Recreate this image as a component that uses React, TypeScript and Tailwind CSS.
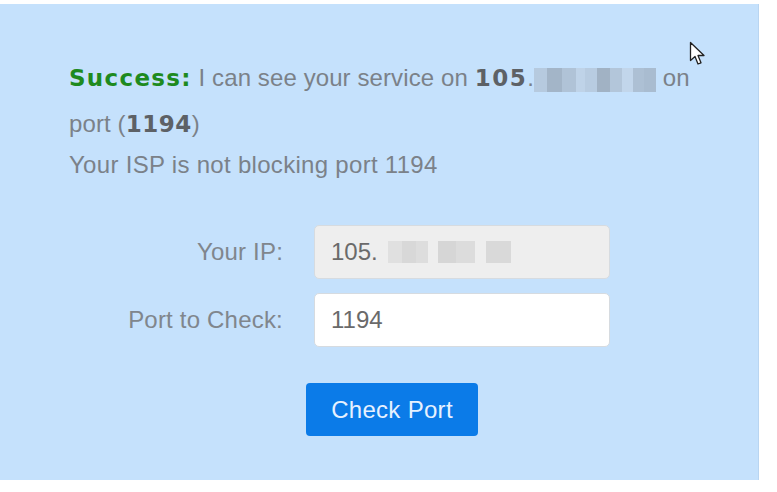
import React from 'react';

type Seg = { w: number; c?: string };

// pixelated "redacted" blocks standing in for the blurred IP digits
const Blur: React.FC<{ segs: Seg[]; h: string }> = ({ segs, h }) => (
    <span className={`inline-flex align-middle ${h}`}>
        {segs.map((s, i) => (
            <span key={i} className="h-full" style={{ width: s.w, backgroundColor: s.c ?? 'transparent' }} />
        ))}
    </span>
);

const Cursor = () => (
    <svg className="absolute left-[689px] top-[37px]" width="18" height="26" viewBox="0 0 18 26">
        <path d="M1.5 1.5 L1.5 19.5 L6 15.5 L9 23 L12 21.8 L9 14.5 L15 14.5 Z" fill="#fff" stroke="#222" strokeWidth="1.3" strokeLinejoin="round" />
    </svg>
);

export default function App() {
    const lineSegs: Seg[] = [
        { w: 13, c: '#b6cadf' }, { w: 15, c: '#a3b5c8' }, { w: 14, c: '#b0c3d7' }, { w: 9, c: '#bfd3e8' },
        { w: 12, c: '#b8cce1' }, { w: 13, c: '#a1b2c4' }, { w: 12, c: '#b3c6da' }, { w: 11, c: '#c2d6eb' },
        { w: 11, c: '#adc0d4' }, { w: 12, c: '#a9bcd0' },
    ];
    const inputSegs: Seg[] = [
        { w: 14, c: '#e0e0e0' }, { w: 14, c: '#d8d8d8' }, { w: 12, c: '#dddddd' }, { w: 10 },
        { w: 18, c: '#d6d6d6' }, { w: 19, c: '#dcdcdc' }, { w: 11 }, { w: 25, c: '#d9d9d9' },
    ];
    const boldFont = { fontFamily: '"DejaVu Sans", sans-serif' };

    return (
        <div className="w-[777px] h-[492px] bg-white pt-[4px]" style={{ fontFamily: '"Liberation Sans", Arial, sans-serif' }}>
            <div className="relative w-[759px] h-[476px] bg-[#c5e1fc] border-r border-[#b9d5f1] pt-[51px] pl-[69px]">
                <Cursor />

                {/* result message */}
                <p className="text-[24px] leading-[46px] tracking-[0.1px] text-[#7b8189]">
                    <b className="text-[#1e8a1e] text-[23px] tracking-[1.3px]" style={boldFont}>Success:</b> I can see your service on{' '}
                    <b className="text-[#5d6166] text-[23px] tracking-[1.5px]" style={boldFont}>105</b>
                    <span>.</span>
                    <Blur segs={lineSegs} h="h-[24px]" /> on
                    <br />
                    port (<b className="text-[#5d6166] text-[23px] tracking-[0.5px]" style={boldFont}>1194</b>)
                </p>
                <p className="text-[24px] leading-[36px] tracking-[0.3px] text-[#7b8189]">Your ISP is not blocking port 1194</p>

                {/* form */}
                <div className="mt-[42px] -ml-[69px] flex flex-col gap-[14px]">
                    <div className="flex items-center">
                        <label className="w-[283px] text-right text-[24px] tracking-[0.2px] text-[#80868d]">Your IP:</label>
                        <div className="ml-[31px] w-[296px] h-[54px] rounded-[5px] border border-[#d6dbe0] bg-[#eeeeee] flex items-center pl-[16px] text-[24px] text-[#6a6a6a]">
                            105.<span className="w-[10px]" />
                            <Blur segs={inputSegs} h="h-[22px]" />
                        </div>
                    </div>
                    <div className="flex items-center">
                        <label className="w-[283px] text-right text-[24px] tracking-[0.2px] text-[#80868d]">Port to Check:</label>
                        <div className="ml-[31px] w-[296px] h-[54px] rounded-[5px] border border-[#d6dbe0] bg-white flex items-center pl-[16px] text-[24px] text-[#6a6a6a]">
                            1194
                        </div>
                    </div>
                    <div className="flex pl-[306px] mt-[22px]">
                        <button className="w-[172px] h-[53px] rounded-[4px] bg-[#0b7be8] text-[24px] tracking-[0.3px] text-[#e6f1ff]">
                            Check Port
                        </button>
                    </div>
                </div>
            </div>
        </div>
    );
}
